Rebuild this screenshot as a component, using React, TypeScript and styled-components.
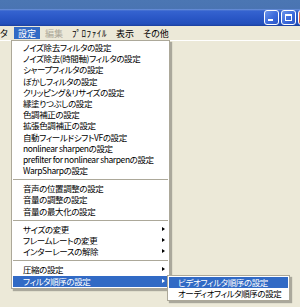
import styled, { createGlobalStyle } from "styled-components";

const GlobalStyle = createGlobalStyle`
  html, body {
    margin: 0;
    padding: 0;
    background: #ece9d8;
    overflow: hidden;
  }
  body {
    font-family: "Noto Sans CJK JP", "Noto Sans", sans-serif;
    font-feature-settings: "palt";
  }
`;

const Window = styled.div`
  position: relative;
  width: 300px;
  height: 307px;
  display: flex;
  flex-direction: column;
  background: #ece9d8;
  overflow: hidden;
`;

const TitleBar = styled.div`
  height: 26px;
  flex-shrink: 0;
  box-sizing: border-box;
  padding-top: 10px;
  display: flex;
  justify-content: flex-end;
  align-items: flex-start;
  background: linear-gradient(
    to bottom,
    #4b76b3 0,
    #4a74b2 9px,
    #7196d6 9px,
    #3563d0 11px,
    #2a57c6 18px,
    #2350bb 24px,
    #1b3f9c 26px
  );
`;

const Controls = styled.div`
  display: flex;
  gap: 2px;
  margin-right: -13px;
`;

const CaptionButton = styled.div<{ $kind: "min" | "max" | "close" }>`
  position: relative;
  width: 15px;
  height: 15px;
  box-sizing: border-box;
  border: 1px solid #fff;
  border-radius: 3px;
  background: ${(p) =>
    p.$kind === "close"
      ? "linear-gradient(135deg, #e8866a 0%, #d8502c 50%, #c13a16 100%)"
      : "linear-gradient(135deg, #6d95ea 0%, #3f6ddc 50%, #2a55c6 100%)"};
`;

const MinGlyph = styled.span`
  position: absolute;
  left: 3px;
  bottom: 3px;
  width: 5px;
  height: 2px;
  background: #fff;
`;

const MaxGlyph = styled.span`
  position: absolute;
  left: 3px;
  top: 3px;
  width: 7px;
  height: 7px;
  box-sizing: border-box;
  border: 1px solid #fff;
  border-top-width: 2px;
`;

const MenuBar = styled.div`
  height: 14px;
  flex-shrink: 0;
  display: flex;
  align-items: center;
  border-bottom: 1px solid #fff;
  font-size: 9px;
`;

const MenuBarItem = styled.div<{ $active?: boolean; $disabled?: boolean; $wide?: boolean }>`
  height: 12px;
  display: flex;
  align-items: center;
  padding: 0 4px;
  margin-right: 1px;
  white-space: nowrap;
  letter-spacing: ${(p) => (p.$wide ? "0.6px" : "0")};
  background: ${(p) => (p.$active ? "#316ac5" : "transparent")};
  color: ${(p) => (p.$active ? "#fff" : p.$disabled ? "#aca899" : "#000")};
  &:first-child {
    margin-left: -4px;
    margin-right: 2px;
  }
`;

const Dropdown = styled.div<{ $left: number; $top: number; $width: number }>`
  position: absolute;
  left: ${(p) => p.$left}px;
  top: ${(p) => p.$top}px;
  width: ${(p) => p.$width}px;
  box-sizing: border-box;
  padding: 1px;
  background: #fff;
  border: 1px solid #aca899;
  box-shadow: 2px 2px 1px rgba(0, 0, 0, 0.28);
  font-size: 8.5px;
  letter-spacing: -0.4px;
  z-index: ${(p) => (p.$top > 200 ? 2 : 1)};
`;

const Item = styled.div<{ $active?: boolean; $indent: number }>`
  position: relative;
  height: 11.2px;
  line-height: 11.2px;
  padding-left: ${(p) => p.$indent}px;
  white-space: nowrap;
  background: ${(p) => (p.$active ? "#316ac5" : "transparent")};
  color: ${(p) => (p.$active ? "#fff" : "#000")};
`;

const Arrow = styled.span<{ $active?: boolean }>`
  position: absolute;
  right: 3px;
  top: 3px;
  width: 0;
  height: 0;
  border-top: 2.5px solid transparent;
  border-bottom: 2.5px solid transparent;
  border-left: 3px solid ${(p) => (p.$active ? "#fff" : "#000")};
`;

const Separator = styled.div`
  height: 0;
  margin: 3px 0;
  border-top: 1px solid #aca899;
`;

type Entry = { label: string; sub?: boolean; active?: boolean } | "sep";

const entries: Entry[] = [
  { label: "ノイズ除去フィルタの設定" },
  { label: "ノイズ除去(時間軸)フィルタの設定" },
  { label: "シャープフィルタの設定" },
  { label: "ぼかしフィルタの設定" },
  { label: "クリッピング＆リサイズの設定" },
  { label: "縁塗りつぶしの設定" },
  { label: "色調補正の設定" },
  { label: "拡張色調補正の設定" },
  { label: "自動フィールドシフトVFの設定" },
  { label: "nonlinear sharpenの設定" },
  { label: "prefilter for nonlinear sharpenの設定" },
  { label: "WarpSharpの設定" },
  "sep",
  { label: "音声の位置調整の設定" },
  { label: "音量の調整の設定" },
  { label: "音量の最大化の設定" },
  "sep",
  { label: "サイズの変更", sub: true },
  { label: "フレームレートの変更", sub: true },
  { label: "インターレースの解除", sub: true },
  "sep",
  { label: "圧縮の設定", sub: true },
  { label: "フィルタ順序の設定", sub: true, active: true },
];

export default function App() {
  return (
    <Window>
      <GlobalStyle />
      <TitleBar>
        <Controls>
          <CaptionButton $kind="min">
            <MinGlyph />
          </CaptionButton>
          <CaptionButton $kind="max">
            <MaxGlyph />
          </CaptionButton>
          <CaptionButton $kind="close" />
        </Controls>
      </TitleBar>
      <MenuBar>
        <MenuBarItem>タ</MenuBarItem>
        <MenuBarItem $active>設定</MenuBarItem>
        <MenuBarItem $disabled>編集</MenuBarItem>
        <MenuBarItem $wide>ﾌﾟﾛﾌｧｲﾙ</MenuBarItem>
        <MenuBarItem>表示</MenuBarItem>
        <MenuBarItem>その他</MenuBarItem>
      </MenuBar>

      <Dropdown $left={11} $top={40} $width={159}>
        {entries.map((e, i) =>
          e === "sep" ? (
            <Separator key={i} />
          ) : (
            <Item key={i} $indent={10} $active={e.active}>
              {e.label}
              {e.sub && <Arrow $active={e.active} />}
            </Item>
          )
        )}
      </Dropdown>

      <Dropdown $left={167} $top={275} $width={123}>
        <Item $indent={9} $active>
          ビデオフィルタ順序の設定
        </Item>
        <Item $indent={9}>オーディオフィルタ順序の設定</Item>
      </Dropdown>
    </Window>
  );
}
